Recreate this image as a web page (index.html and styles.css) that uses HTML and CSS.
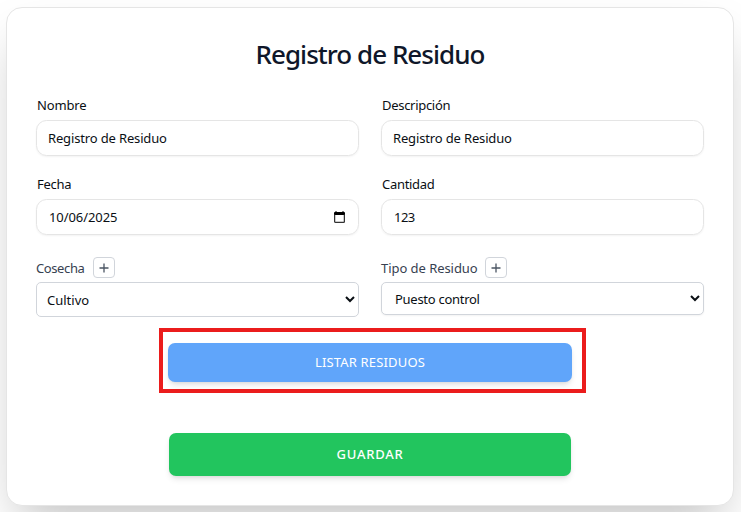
FILE: index.html
```html
<!DOCTYPE html>
<html lang="es">
<head>
<meta charset="utf-8">
<title>Registro de Residuo</title>
<link rel="stylesheet" href="styles.css">
</head>
<body>
<form class="card">
  <h1 class="title"><span>Registro de Residuo</span></h1>
  <div class="grid">
    <div class="field">
      <label class="label label-first" for="nombre">Nombre</label>
      <div class="box"><input class="input" id="nombre" type="text" value="Registro de Residuo"></div>
    </div>
    <div class="field">
      <label class="label" for="descripcion">Descripción</label>
      <div class="box"><input class="input" id="descripcion" type="text" value="Registro de Residuo"></div>
    </div>
    <div class="field">
      <label class="label" for="fecha">Fecha</label>
      <div class="box">
        <input class="input input-date" id="fecha" type="text" value="10/06/2025">
        <svg class="calendar" viewBox="0 0 11 12" width="11" height="12"><path d="M1.5 0h1v1h6V0h1v1H10a1 1 0 0 1 1 1v2H0V2a1 1 0 0 1 1-1h.5z" fill="#000"/><path d="M.6 3.5v7a.8.8 0 0 0 .8.8h8.2a.8.8 0 0 0 .8-.8v-7" fill="none" stroke="#333" stroke-width="1.3"/></svg>
      </div>
    </div>
    <div class="field">
      <label class="label" for="cantidad">Cantidad</label>
      <div class="box"><input class="input input-number" id="cantidad" type="text" value="123"></div>
    </div>
    <div class="field">
      <div class="label-row">
        <label class="label-muted label-short" for="cosecha">Cosecha</label>
        <button class="add" type="button"><svg viewBox="0 0 10 10" width="10" height="10"><path d="M5 .5v9M.5 5h9" stroke="#4b5563" stroke-width="1.3"/></svg></button>
      </div>
      <select class="select" id="cosecha"><option>Cultivo</option></select>
    </div>
    <div class="field">
      <div class="label-row">
        <label class="label-muted label-long" for="tipo">Tipo de Residuo</label>
        <button class="add" type="button"><svg viewBox="0 0 10 10" width="10" height="10"><path d="M5 .5v9M.5 5h9" stroke="#4b5563" stroke-width="1.3"/></svg></button>
      </div>
      <select class="select select-type" id="tipo"><option>Puesto control</option></select>
    </div>
  </div>
  <div class="highlight"><button class="btn btn-list" type="button">LISTAR RESIDUOS</button></div>
  <button class="btn btn-save" type="button">GUARDAR</button>
</form>
</body>
</html>
```

FILE: styles.css
```css
* { box-sizing: border-box; }
body {
  margin: 0;
  height: 512px;
  overflow: hidden;
  padding: 7px 7px 0 6px;
  background: #fff;
  font-family: "Noto Sans", "Open Sans", sans-serif;
  font-size: 13px;
  color: #0a0f14;
}
input, select, button { font: inherit; color: inherit; margin: 0; }
.card {
  width: 728px;
  height: 499px;
  padding: 28px 29px 0;
  border: 1px solid #e5e5e5;
  border-radius: 16px;
  background: #fff;
  box-shadow: 0 25px 50px -12px rgba(0, 0, 0, .25);
  display: flex;
  flex-direction: column;
}
.title {
  margin: 0;
  height: 36px;
  line-height: 36px;
  text-align: center;
  font-size: 26px;
  font-weight: 500;
  letter-spacing: -.97px;
  color: #0f172a;
}
.grid {
  display: grid;
  grid-template-columns: 323px 323px;
  column-gap: 22px;
  grid-template-rows: 79px 79px 86px;
  margin-top: 24px;
}
.label {
  display: block;
  height: 24px;
  line-height: 18px;
  padding-left: 1px;
  letter-spacing: -.3px;
}
.label-first { letter-spacing: -.15px; }
.box {
  height: 36px;
  display: flex;
  align-items: center;
  padding: 0 13px 0 11px;
  border: 1px solid #e5e5e5;
  border-radius: 10.5px;
  box-shadow: 0 1px 2px rgba(0, 0, 0, .05);
}
.input {
  flex: 1;
  min-width: 0;
  height: 20px;
  padding: 0;
  border: 0;
  outline: 0;
  background: none;
  letter-spacing: -.15px;
}
.input-date { padding-left: 1px; letter-spacing: -.08px; }
.input-number { padding-left: 1px; letter-spacing: -.5px; }
.label-row {
  display: flex;
  height: 28px;
  padding-top: 3px;
}
.label-muted { line-height: 22px; color: #374151; }
.label-short { width: 57px; letter-spacing: -.4px; }
.label-long { width: 104px; letter-spacing: -.05px; }
.add {
  width: 22px;
  height: 21px;
  padding: 0;
  display: flex;
  align-items: center;
  justify-content: center;
  border: 1px solid #d1d5db;
  border-radius: 4px;
  background: #fff;
}
.select {
  display: block;
  width: 323px;
  height: 35px;
  padding: 0 7px 0 6px;
  border: 1px solid #d1d5db;
  border-radius: 5px;
  background-color: #fff;
}
.select-type {
  height: 33px;
  padding-left: 9px;
  letter-spacing: -.28px;
  box-shadow: 0 1px 2px rgba(0, 0, 0, .05);
}
.highlight {
  width: 427px;
  height: 65px;
  margin: -12px 0 0 123px;
  padding: 11px 0 0 5px;
  border: 4px solid #eb1c1c;
}
.btn {
  display: block;
  border: 0;
  padding: 0 0 2px;
  border-radius: 7px;
  color: #fff;
  box-shadow: 0 4px 6px -1px rgba(0, 0, 0, .1), 0 2px 4px -2px rgba(0, 0, 0, .1);
}
.btn-list {
  width: 404px;
  height: 39px;
  background: #60a5fa;
  letter-spacing: .17px;
}
.btn-save {
  width: 402px;
  height: 43px;
  margin: 40px 0 0 133px;
  background: #22c55e;
  font-weight: 500;
  letter-spacing: .8px;
}
```
